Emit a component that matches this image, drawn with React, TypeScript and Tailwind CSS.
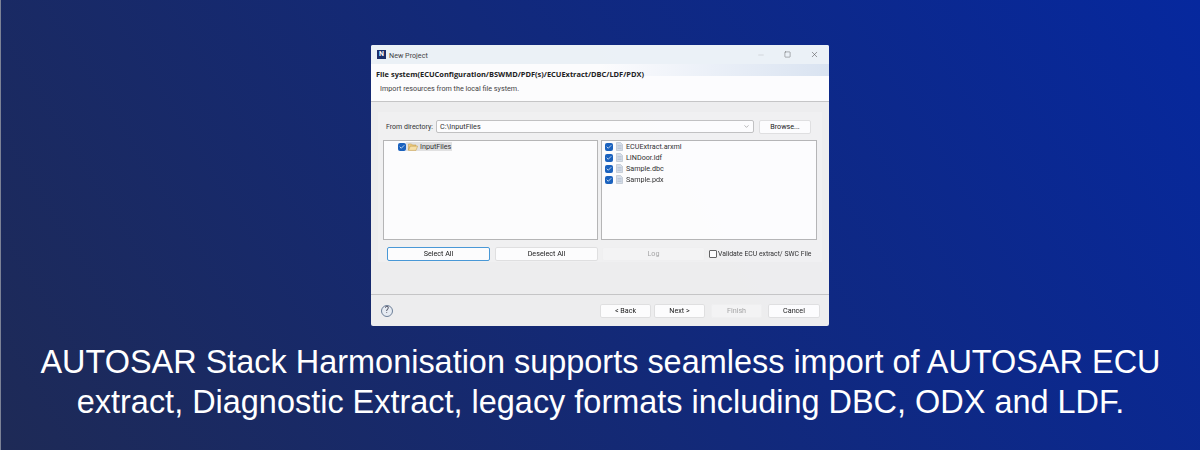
import { Check, ChevronDown, Minus, Square, X } from 'lucide-react';

const files = ['ECUExtract.arxml', 'LINDoor.ldf', 'Sample.dbc', 'Sample.pdx'];

const CheckBox = () => (
  <span className="w-[8px] h-[8px] rounded-[2px] bg-[#1c64c0] flex items-center justify-center shrink-0">
    <Check size={6} strokeWidth={3} className="text-white" />
  </span>
);

const FileIcon = () => (
  <svg width="7" height="9" viewBox="0 0 7 9" className="shrink-0">
    <path d="M0.5 0.5H4.5L6.5 2.5V8.5H0.5Z" fill="#d8e0ea" stroke="#b4bcc8" strokeWidth="0.6" />
    <path d="M1.5 3.5H5.5M1.5 5H5.5M1.5 6.5H5.5" stroke="#a8b6c8" strokeWidth="0.5" />
  </svg>
);

const FolderIcon = () => (
  <svg width="10" height="8" viewBox="0 0 10 8" className="shrink-0">
    <path d="M0.5 1H3.5L4.5 2H8V3.2H2.2L0.5 7Z" fill="#f2d48c" stroke="#c79a3e" strokeWidth="0.5" />
    <path d="M2.2 3.2H9.6L8 7.4H0.5Z" fill="#f9e2a8" stroke="#c79a3e" strokeWidth="0.5" />
  </svg>
);

const DlgButton = ({ label, width, disabled, focused }: { label: string; width: string; disabled?: boolean; focused?: boolean }) => (
  <div
    className={`${width} h-[14px] rounded-[2px] flex items-center justify-center text-[7.2px] shrink-0 ${
      focused
        ? 'border border-[#4a9ad8] bg-white text-[#222]'
        : disabled
          ? 'border border-[#f2f2f2] bg-[#f6f6f6] text-[#a8a8a8]'
          : 'border border-[#e2e2e2] bg-white text-[#222]'
    }`}
  >
    <span className="pt-[1px]">{label}</span>
  </div>
);

export default function App() {
  return (
    <div
      className="w-[1200px] h-[450px] overflow-hidden flex flex-col items-center pt-[45px] bg-[linear-gradient(58deg,#1e2a56,#06289e)] border-l border-[#7c8296]"
      style={{ fontFamily: '"Liberation Sans", Arial, sans-serif' }}
    >
      <div
        className="w-[458px] h-[281px] shrink-0 bg-[#f0f0f0] flex flex-col text-[#333] -ml-px rounded-[2px] overflow-hidden blur-[0.4px] opacity-[0.99]"
        style={{ fontFamily: 'Roboto, sans-serif' }}
      >
        {/* title bar */}
        <div className="h-[19px] shrink-0 bg-[#eef4f8] flex items-center pl-[6px] pr-[10px]">
          <span className="w-[9px] h-[9px] bg-[#1c2f6b] text-white text-[7px] font-bold leading-[9px] text-center">N</span>
          <span className="ml-[3px] mt-[3px] text-[7.2px] text-[#444]">New Project</span>
          <div className="ml-auto flex items-center gap-[19px] text-[#555]">
            <Minus size={8} strokeWidth={1} className="text-[#aaa]" />
            <Square size={7} strokeWidth={1.5} />
            <X size={9} strokeWidth={1.5} />
          </div>
        </div>

        {/* wizard header */}
        <div className="h-[38px] shrink-0 bg-white border-b border-[#c8c8c8] flex flex-col">
          <div
            className="h-[20px] pt-[2px] flex items-center text-[7.45px] font-bold text-[#222] bg-gradient-to-r from-white via-white to-[#dce6f2] bg-[length:100%_12px] bg-no-repeat pl-[5px]"
            style={{ fontFamily: '"Open Sans", sans-serif' }}
          >
            File system(ECUConfiguration/BSWMD/PDF(s)/ECUExtract/DBC/LDF/PDX)
          </div>
          <div className="pl-[9px] text-[7.2px] leading-[9px] text-[#444]">Import resources from the local file system.</div>
        </div>

        {/* page */}
        <div className="flex-1 pl-[7px] pr-[7px] pt-[10px]">
          <div className="h-[150px] bg-[#f3f3f3] pt-[8px]">
            <div className="flex items-center h-[13px] pl-[8px]">
              <span className="text-[7px] pt-[1px] text-[#333] w-[50px] shrink-0 whitespace-nowrap">From directory:</span>
              <div className="w-[318px] h-[13px] bg-white border border-[#c4c4c4] rounded-[2px] flex items-center px-[3px] text-[7.2px] text-[#333]">
                <span className="pt-[1px]">C:\InputFiles</span>
                <ChevronDown size={7} className="ml-auto text-[#888]" />
              </div>
              <div className="ml-[5px]">
                <DlgButton label="Browse..." width="w-[52px]" />
              </div>
            </div>
            <div className="flex gap-[3px] mt-[7px] pl-[5px]">
              <div className="w-[215px] h-[100px] bg-white border border-[#b8b8b8] pl-[14px] pt-[1px]">
                <div className="flex items-center h-[9px]">
                  <CheckBox />
                  <span className="flex items-center gap-[2px] bg-[#e4e4e4] pl-[2px] pr-[1px] h-[9px] text-[7.2px] text-[#333]">
                    <FolderIcon />
                    <span className="pt-[1px]">InputFiles</span>
                  </span>
                </div>
              </div>
              <div className="w-[216px] h-[100px] bg-white border border-[#b8b8b8] pl-[3px] flex flex-col">
                {files.map((f) => (
                  <div key={f} className="flex items-center gap-[3px] h-[11px] text-[7.2px] text-[#333]">
                    <CheckBox />
                    <FileIcon />
                    <span className="pt-[2px]">{f}</span>
                  </div>
                ))}
              </div>
            </div>
            <div className="flex items-center mt-[7px] pl-[9px]">
              <DlgButton label="Select All" width="w-[103px]" focused />
              <div className="w-[5px]" />
              <DlgButton label="Deselect All" width="w-[103px]" />
              <div className="w-[4px]" />
              <DlgButton label="Log" width="w-[103px]" disabled />
              <span className="ml-[4px] w-[8px] h-[8px] border border-[#666] rounded-[1px] bg-white shrink-0" />
              <span className="ml-[1px] text-[6.85px] text-[#333] whitespace-nowrap">Validate ECU extract/ SWC File</span>
            </div>
          </div>
        </div>

        {/* footer */}
        <div className="h-[32px] shrink-0 border-t border-[#c8c8c8] flex items-center pl-[10px] pr-[9px]">
          <span className="w-[12px] h-[12px] rounded-full border border-[#6d8098] bg-[#e9eef4] flex items-center justify-center text-[9px] text-[#445]">?</span>
          <div className="ml-auto flex items-center">
            <DlgButton label="< Back" width="w-[51px]" />
            <div className="w-[3px]" />
            <DlgButton label="Next >" width="w-[51px]" />
            <div className="w-[6px]" />
            <DlgButton label="Finish" width="w-[51px]" disabled />
            <div className="w-[6px]" />
            <DlgButton label="Cancel" width="w-[52px]" />
          </div>
        </div>
      </div>

      <p className="mt-[16px] w-[1190px] text-center text-white text-[32.45px] leading-[40px]">
        AUTOSAR Stack Harmonisation supports seamless import of AUTOSAR ECU extract, Diagnostic Extract, legacy formats including DBC, ODX and LDF.
      </p>
    </div>
  );
}
